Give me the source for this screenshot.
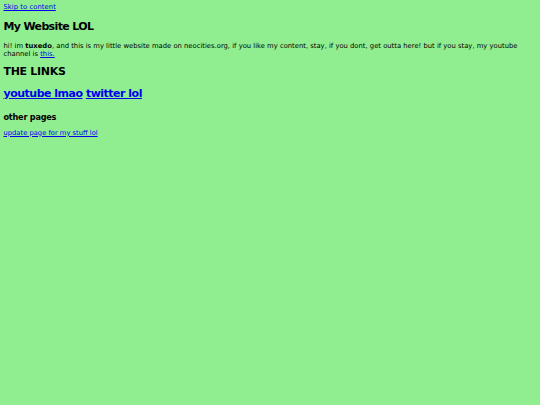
import React from "react";

export default function App() {
  return (
    <div
      className="min-h-screen w-full bg-[#90EE90] text-black pl-[3.5px] pt-[3.4px] pr-[2px]"
      style={{ fontFamily: '"DejaVu Sans", Verdana, sans-serif' }}
    >
      <a href="#main" className="block w-fit text-[6.9px] leading-[9px] text-[#0000EE] underline">
        Skip to content
      </a>
      <main id="main">
        <h1 className="mt-[8px] text-[11px] leading-[14px] font-bold tracking-[-0.65px]">My Website LOL</h1>
        <p className="mt-[7.2px] text-[6.8px] leading-[8.2px]">
          hi! im <b>tuxedo</b>, and this is my little website made on neocities.org, if you like my content, stay, if you dont, get outta here! but if you stay, my youtube channel is{" "}
          <a href="#" className="text-[#0000EE] underline">this.</a>
        </p>
        <h2 className="mt-[7.4px] text-[11px] leading-[14px] font-bold tracking-[-0.3px]">THE LINKS</h2>
        <div className="mt-[7.6px] text-[11px] leading-[14px] font-bold tracking-[-0.5px]">
          <a href="#" className="text-[#0000EE] underline">youtube lmao</a>{" "}
          <a href="#" className="text-[#0000EE] underline">twitter lol</a>
        </div>
        <h3 className="mt-[10.6px] text-[8.2px] leading-[10px] font-bold tracking-[-0.25px]">other pages</h3>
        <a href="#" className="mt-[7px] block w-fit text-[6.75px] leading-[9px] text-[#0000EE] underline">
          update page for my stuff lol
        </a>
      </main>
    </div>
  );
}
